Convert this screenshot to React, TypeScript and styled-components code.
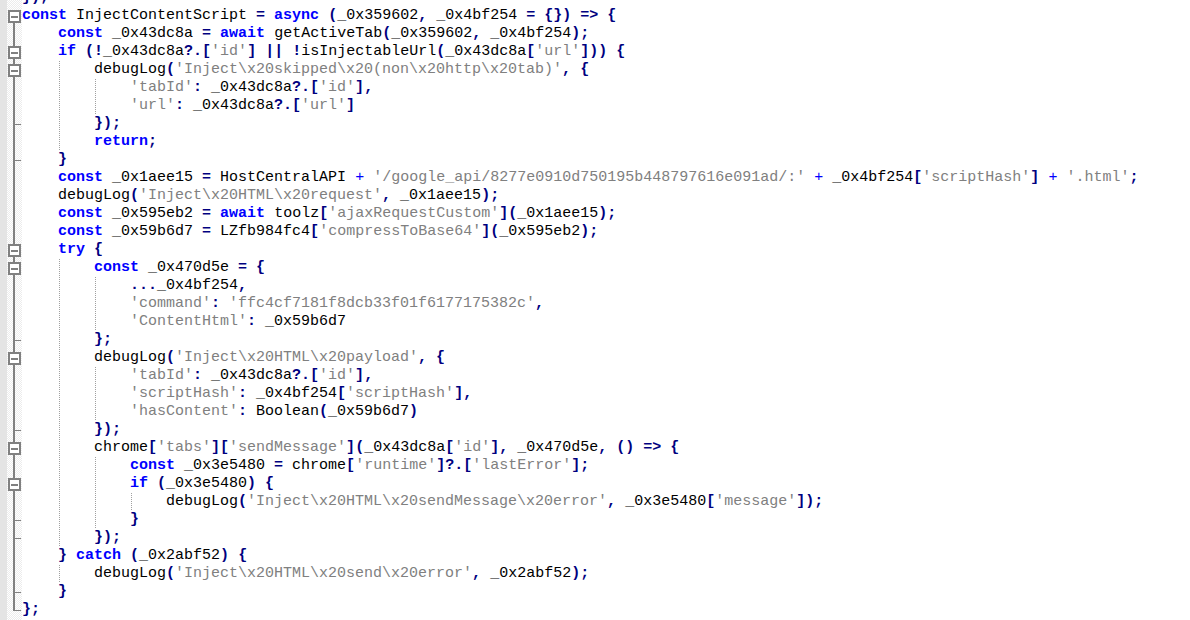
import React from 'react';
import styled, { createGlobalStyle } from 'styled-components';

type Fold = 'none' | 'head' | 'box' | 'line' | 'tick' | 'end';
type Kind = 'kw' | 'str' | 'op' | 'plus' | 'id' | 'ws';

const LINES: [number, string, Fold][] = [
  [0, '});', 'none'],
  [0, 'const InjectContentScript = async (_0x359602, _0x4bf254 = {}) => {', 'head'],
  [1, 'const _0x43dc8a = await getActiveTab(_0x359602, _0x4bf254);', 'line'],
  [1, "if (!_0x43dc8a?.['id'] || !isInjectableUrl(_0x43dc8a['url'])) {", 'box'],
  [2, "debugLog('Inject\\x20skipped\\x20(non\\x20http\\x20tab)', {", 'box'],
  [3, "'tabId': _0x43dc8a?.['id'],", 'line'],
  [3, "'url': _0x43dc8a?.['url']", 'line'],
  [2, '});', 'tick'],
  [2, 'return;', 'line'],
  [1, '}', 'tick'],
  [1, "const _0x1aee15 = HostCentralAPI + '/google_api/8277e0910d750195b448797616e091ad/:' + _0x4bf254['scriptHash'] + '.html';", 'line'],
  [1, "debugLog('Inject\\x20HTML\\x20request', _0x1aee15);", 'line'],
  [1, "const _0x595eb2 = await toolz['ajaxRequestCustom'](_0x1aee15);", 'line'],
  [1, "const _0x59b6d7 = LZfb984fc4['compressToBase64'](_0x595eb2);", 'line'],
  [1, 'try {', 'box'],
  [2, 'const _0x470d5e = {', 'box'],
  [3, '..._0x4bf254,', 'line'],
  [3, "'command': 'ffc4cf7181f8dcb33f01f6177175382c',", 'line'],
  [3, "'ContentHtml': _0x59b6d7", 'line'],
  [2, '};', 'tick'],
  [2, "debugLog('Inject\\x20HTML\\x20payload', {", 'box'],
  [3, "'tabId': _0x43dc8a?.['id'],", 'line'],
  [3, "'scriptHash': _0x4bf254['scriptHash'],", 'line'],
  [3, "'hasContent': Boolean(_0x59b6d7)", 'line'],
  [2, '});', 'tick'],
  [2, "chrome['tabs']['sendMessage'](_0x43dc8a['id'], _0x470d5e, () => {", 'box'],
  [3, "const _0x3e5480 = chrome['runtime']?.['lastError'];", 'line'],
  [3, 'if (_0x3e5480) {', 'box'],
  [4, "debugLog('Inject\\x20HTML\\x20sendMessage\\x20error', _0x3e5480['message']);", 'line'],
  [3, '}', 'tick'],
  [2, '});', 'tick'],
  [1, '} catch (_0x2abf52) {', 'line'],
  [2, "debugLog('Inject\\x20HTML\\x20send\\x20error', _0x2abf52);", 'line'],
  [1, '}', 'tick'],
  [0, '};', 'end'],
  [0, '', 'none'],
];

const KEYWORDS = new Set(['const', 'async', 'await', 'if', 'return', 'try', 'catch']);

function tokenize(src: string): { kind: Kind; text: string }[] {
  const re = /('[^']*')|([A-Za-z_$][\w$]*)|(\s+)|(\.\.\.|\?\.|=>|\|\||[^\sA-Za-z_$'])/g;
  const out: { kind: Kind; text: string }[] = [];
  let m: RegExpExecArray | null;
  while ((m = re.exec(src))) {
    if (m[1]) out.push({ kind: 'str', text: m[1] });
    else if (m[2]) out.push({ kind: KEYWORDS.has(m[2]) ? 'kw' : 'id', text: m[2] });
    else if (m[3]) out.push({ kind: 'ws', text: m[3] });
    else out.push({ kind: m[4] === '+' ? 'plus' : 'op', text: m[4] });
  }
  return out;
}

const Global = createGlobalStyle`
  html, body { margin: 0; padding: 0; background: #ffffff; }
`;

const Editor = styled.div`
  width: 1190px;
  height: 620px;
  overflow: hidden;
  background: #ffffff;
  font-family: "Liberation Mono", "Courier New", monospace;
  font-size: 15px;
  line-height: 18px;
`;

const Lines = styled.div`
  display: flex;
  flex-direction: column;
  margin-top: -11px;
`;

const Row = styled.div`
  display: flex;
  height: 18px;
`;

const MarginStrip = styled.div`
  width: 7px;
  flex: none;
  background: #e4e4e4;
`;

const FoldCell = styled.div`
  width: 15px;
  flex: none;
  background: repeating-conic-gradient(#ececec 0% 25%, #ffffff 0% 50%) 0 0 / 2px 2px;
  svg { display: block; }
`;

const Code = styled.div`
  display: flex;
  flex: 1;
  white-space: pre;
  color: #000000;
`;

const Indent = styled.span<{ $guide: boolean }>`
  display: block;
  flex: none;
  width: 36px;
  height: 18px;
  background-image: ${(p) =>
    p.$guide ? 'linear-gradient(to bottom, #a0a0a0 50%, transparent 50%)' : 'none'};
  background-size: 1px 2px;
  background-repeat: repeat-y;
  background-position: 1px 0;
`;

const Text = styled.span`
  display: block;
`;

const Tok = styled.span<{ $kind: Kind }>`
  color: ${(p) =>
    p.$kind === 'kw' ? '#0000ff'
      : p.$kind === 'str' ? '#808080'
      : p.$kind === 'op' ? '#000080'
      : p.$kind === 'plus' ? '#0000ff'
      : '#000000'};
  font-weight: ${(p) => (p.$kind === 'kw' || p.$kind === 'op' ? 700 : 400)};
`;

const G = '#808080';

function FoldMark({ type }: { type: Fold }) {
  return (
    <svg width="15" height="18" viewBox="0 0 15 18">
      {type === 'line' && <rect x="6" y="0" width="2" height="18" fill={G} />}
      {type === 'tick' && (
        <>
          <rect x="6" y="0" width="2" height="18" fill={G} />
          <rect x="8" y="9" width="6" height="1" fill={G} />
        </>
      )}
      {type === 'end' && (
        <>
          <rect x="6" y="0" width="2" height="10" fill={G} />
          <rect x="8" y="9" width="6" height="1" fill={G} />
        </>
      )}
      {(type === 'head' || type === 'box') && (
        <>
          {type === 'box' && <rect x="6" y="0" width="2" height="3" fill={G} />}
          <rect x="6" y="16" width="2" height="2" fill={G} />
          <rect x="2" y="4" width="11" height="11" fill="#ffffff" stroke={G} strokeWidth="2" />
          <rect x="4" y="9" width="7" height="2" fill={G} />
        </>
      )}
    </svg>
  );
}

function CodeLine({ indent, src, fold }: { indent: number; src: string; fold: Fold }) {
  return (
    <Row>
      <MarginStrip />
      <FoldCell>
        <FoldMark type={fold} />
      </FoldCell>
      <Code>
        {Array.from({ length: indent }, (_, i) => (
          <Indent key={i} $guide={i > 0} />
        ))}
        <Text>
          {tokenize(src).map((t, i) => (
            <Tok key={i} $kind={t.kind}>
              {t.text}
            </Tok>
          ))}
        </Text>
      </Code>
    </Row>
  );
}

export default function App() {
  return (
    <>
      <Global />
      <Editor>
        <Lines>
          {LINES.map(([indent, src, fold], i) => (
            <CodeLine key={i} indent={indent} src={src} fold={fold} />
          ))}
        </Lines>
      </Editor>
    </>
  );
}
